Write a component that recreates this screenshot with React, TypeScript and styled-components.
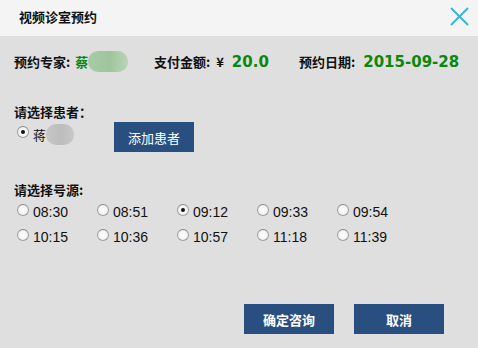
import styled, { createGlobalStyle } from 'styled-components'

const GlobalStyle = createGlobalStyle`
  html, body {
    margin: 0;
    padding: 0;
    background: #dfdfdf;
  }
  body {
    font-family: "Noto Sans CJK SC", "Liberation Sans", sans-serif;
    color: #111;
  }
`

const Dialog = styled.div`
  width: 478px;
  height: 348px;
  display: flex;
  flex-direction: column;
  background: #dfdfdf;
  overflow: hidden;
`

const Header = styled.div`
  height: 36px;
  flex: none;
  display: flex;
  align-items: center;
  justify-content: space-between;
  padding: 0 9px 0 19px;
  background: #f4f4f4;
`

const Title = styled.h1`
  margin: 0;
  font-size: 13px;
  font-weight: bold;
  line-height: 18px;
  position: relative;
  top: -1px;
`

const CloseButton = styled.button`
  width: 20px;
  height: 20px;
  padding: 0;
  border: 0;
  background: none;
  display: flex;
  align-items: center;
  justify-content: center;
  cursor: pointer;
  position: relative;
  top: -2px;
`

const Body = styled.div`
  flex: 1;
  display: flex;
  flex-direction: column;
  padding: 15px 14px 0 14px;
`

const InfoRow = styled.div`
  display: grid;
  grid-template-columns: 140px 145px auto;
  align-items: center;
  height: 20px;
`

const InfoItem = styled.div`
  display: flex;
  align-items: center;
  font-size: 13px;
  font-weight: bold;
  white-space: pre;
`

const Value = styled.span<{ $big?: boolean }>`
  color: #0b870b;
  margin-left: ${p => (p.$big ? '8px' : '5px')};
  font-family: ${p => (p.$big ? '"DejaVu Sans", sans-serif' : 'inherit')};
  font-size: ${p => (p.$big ? '15px' : '13px')};
  font-weight: bold;
`

const Blur = styled.span<{ $tone: 'green' | 'grey'; $w: number }>`
  display: inline-block;
  width: ${p => p.$w}px;
  height: 21px;
  border-radius: 10px;
  background: ${p =>
    p.$tone === 'green'
      ? 'linear-gradient(90deg, #a8cca6 0%, #9fc59d 55%, #b9d5b6 100%)'
      : 'linear-gradient(90deg, #c6c6c6 0%, #bdbdbd 55%, #c8c8c8 100%)'};
  filter: blur(0.6px);
`

const SectionLabel = styled.div<{ $top: number }>`
  margin-top: ${p => p.$top}px;
  font-size: 13px;
  font-weight: bold;
  line-height: 18px;
`

const PatientRow = styled.div`
  display: flex;
  align-items: center;
  margin-top: 1px;
  height: 30px;
`

const PatientOption = styled.label`
  width: 100px;
  display: flex;
  align-items: center;
  font-size: 13px;
  position: relative;
  top: -3px;
`

const Radio = styled.input.attrs({ type: 'radio' })`
  appearance: none;
  flex: none;
  width: 12px;
  height: 12px;
  margin: 0 4px 0 3px;
  border-radius: 50%;
  border: 1px solid #a0a0a0;
  border-top-color: #8a8a8a;
  background: radial-gradient(circle at 50% 55%, #ffffff 0%, #f2f2f2 60%, #d8d8d8 100%);
  display: grid;
  place-items: center;
  position: relative;
  top: -2px;

  &:checked::after {
    content: '';
    width: 4px;
    height: 4px;
    border-radius: 50%;
    background: #111;
  }
`

const PrimaryButton = styled.button<{ $w: number; $bold?: boolean }>`
  width: ${p => p.$w}px;
  height: 30px;
  border: 0;
  padding: 0;
  background: #284f80;
  color: #fff;
  font-family: "Noto Sans CJK SC", sans-serif;
  font-size: 13px;
  font-weight: ${p => (p.$bold ? 'bold' : 'normal')};
  cursor: pointer;
`

const SlotGrid = styled.div`
  display: grid;
  grid-template-columns: repeat(5, 80px);
  row-gap: 5px;
  margin-top: 3px;
`

const Slot = styled.label`
  display: flex;
  align-items: center;
  height: 20px;
  font-family: "Liberation Sans", sans-serif;
  font-size: 14px;
`

const Footer = styled.div`
  display: flex;
  justify-content: flex-end;
  gap: 20px;
  margin-top: auto;
  margin-right: 20px;
  margin-bottom: 14px;
`

const slots = ['08:30', '08:51', '09:12', '09:33', '09:54', '10:15', '10:36', '10:57', '11:18', '11:39']

export default function App() {
  return (
    <>
      <GlobalStyle />
      <Dialog>
        <Header>
          <Title>视频诊室预约</Title>
          <CloseButton aria-label="关闭">
            <svg width="19" height="19" viewBox="0 0 19 19">
              <path d="M1 1 L18 18 M18 1 L1 18" stroke="#3ab6d4" strokeWidth="2" fill="none" />
            </svg>
          </CloseButton>
        </Header>
        <Body>
          <InfoRow>
            <InfoItem>
              预约专家:
              <Value>蔡</Value>
              <Blur $tone="green" $w={40} />
            </InfoItem>
            <InfoItem>
              支付金额:  ¥<Value $big>20.0</Value>
            </InfoItem>
            <InfoItem>
              预约日期:<Value $big>2015-09-28</Value>
            </InfoItem>
          </InfoRow>

          <SectionLabel $top={32}>请选择患者：</SectionLabel>
          <PatientRow>
            <PatientOption>
              <Radio name="patient" defaultChecked />
              蒋
              <Blur $tone="grey" $w={28} />
            </PatientOption>
            <PrimaryButton $w={80}>添加患者</PrimaryButton>
          </PatientRow>

          <SectionLabel $top={29}>请选择号源:</SectionLabel>
          <SlotGrid>
            {slots.map(time => (
              <Slot key={time}>
                <Radio name="slot" defaultChecked={time === '09:12'} />
                {time}
              </Slot>
            ))}
          </SlotGrid>

          <Footer>
            <PrimaryButton $w={90} $bold>
              确定咨询
            </PrimaryButton>
            <PrimaryButton $w={90} $bold>
              取消
            </PrimaryButton>
          </Footer>
        </Body>
      </Dialog>
    </>
  )
}
